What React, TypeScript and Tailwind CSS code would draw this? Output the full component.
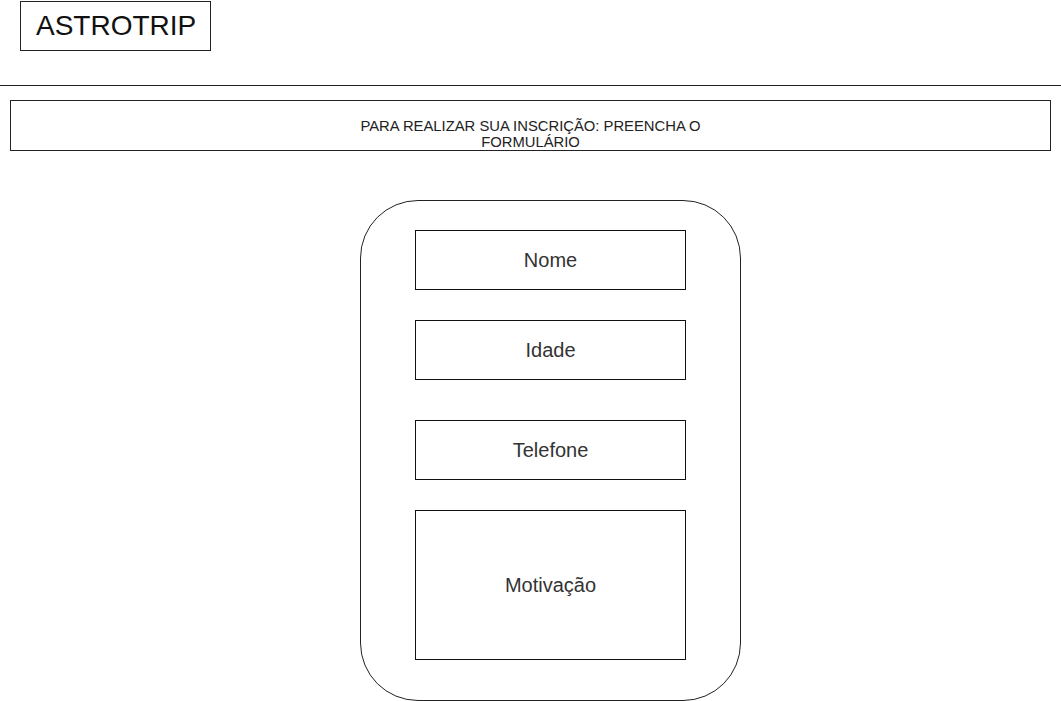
import React from 'react'

const fields = [
  { label: 'Nome', h: 'h-[60px]', mt: 'mt-0' },
  { label: 'Idade', h: 'h-[60px]', mt: 'mt-[30px]' },
  { label: 'Telefone', h: 'h-[60px]', mt: 'mt-[40px]' },
  { label: 'Motivação', h: 'h-[150px]', mt: 'mt-[30px]' },
]

export default function App() {
  return (
    <div className="min-h-[701px] w-[1061px] bg-white font-['Liberation_Sans',Arial,sans-serif] text-[#111]">
      <header className="pl-[20px] pt-[1px]">
        <div className="flex h-[50px] w-[191px] items-center border border-[#222] pl-[15px]">
          <h1 className="text-[28px] leading-none">ASTROTRIP</h1>
        </div>
      </header>

      <hr className="mt-[34px] border-t border-[#222]" />

      <section className="ml-[10px] mt-[14px] h-[51px] w-[1041px] border border-[#222]">
        <p className="mx-auto w-[380px] pt-[17px] text-center text-[14.8px] leading-[16px] text-[#222]">
          PARA REALIZAR SUA INSCRIÇÃO: PREENCHA O FORMULÁRIO
        </p>
      </section>

      <form className="ml-[360px] mt-[49px] h-[501px] w-[381px] rounded-[58px] border border-[#222] pt-[29px]">
        {fields.map((f) => (
          <div
            key={f.label}
            className={`ml-[54px] flex w-[271px] items-center justify-center border border-[#111] text-[20px] text-[#333] ${f.h} ${f.mt}`}
          >
            {f.label}
          </div>
        ))}
      </form>
    </div>
  )
}
